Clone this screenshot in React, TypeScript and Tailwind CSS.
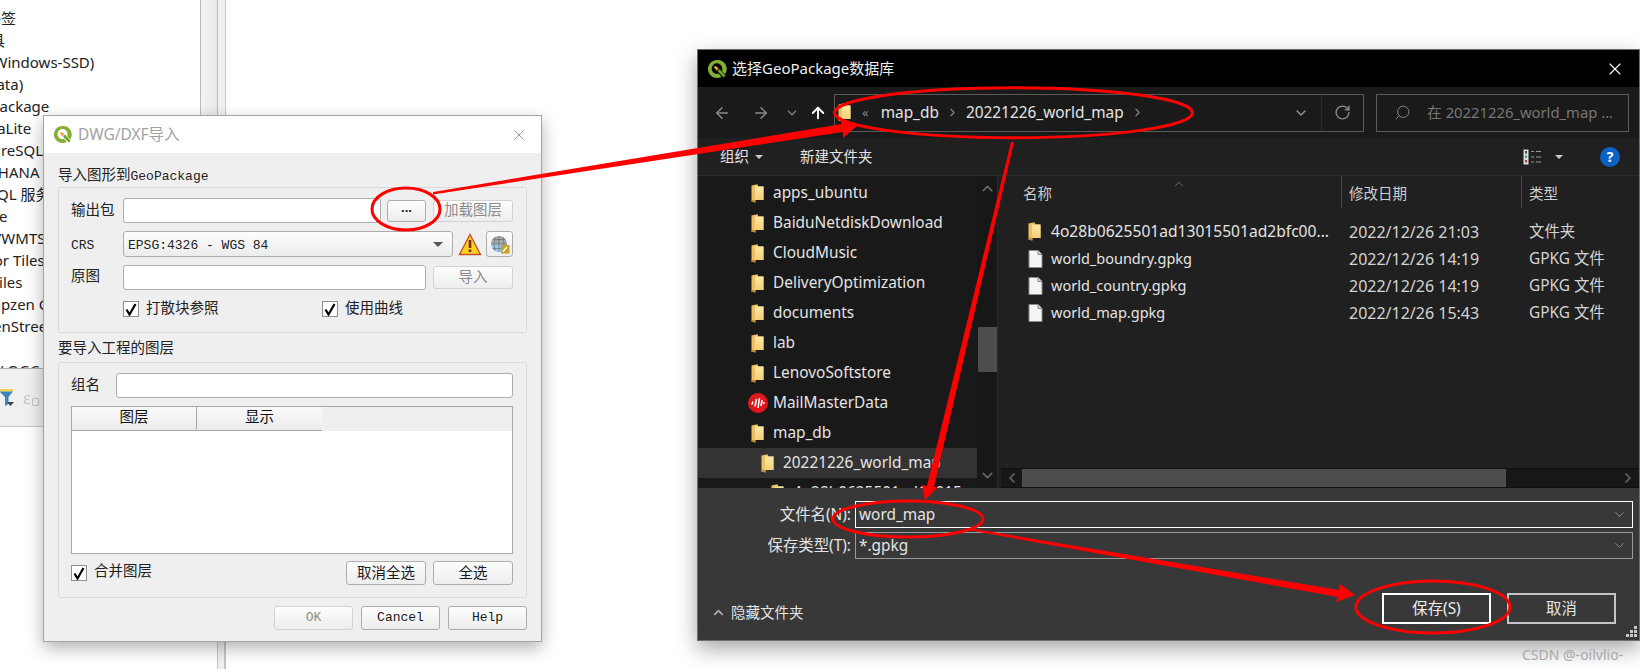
import { ArrowLeft, ArrowRight, ArrowUp, ChevronDown, ChevronLeft, ChevronRight, ChevronUp, RotateCw, Search, X } from "lucide-react";
import type { ReactNode } from "react";

const DARK_FONT = "font-['Noto_Sans','Noto_Sans_CJK_SC',sans-serif]";
const QT_MONO = "font-['Liberation_Mono','Noto_Sans_CJK_SC',monospace]";

const treeRows = [
  { text: "书签", cls: "-ml-[14px]" },
  { text: "具", cls: "-ml-[10px]" },
  { text: "(Windows-SSD)", cls: "-ml-[11px]" },
  { text: "(Data)", cls: "-ml-[19px]" },
  { text: "GeoPackage", cls: "-ml-[38px]" },
  { text: "SpatiaLite", cls: "-ml-[38px]" },
  { text: "PostgreSQL", cls: "-ml-[39px]" },
  { text: "SAP HANA", cls: "-ml-[33px]" },
  { text: "MSSQL 服务", cls: "-ml-[33px]" },
  { text: "Oracle", cls: "-ml-[38px]" },
  { text: "WMS/WMTS", cls: "-ml-[40px]" },
  { text: "Vector Tiles", cls: "-ml-[36px]" },
  { text: "XYZ Tiles", cls: "-ml-[39px]" },
  { text: "Mapzen Global", cls: "-ml-[21px]" },
  { text: "OpenStreetMap", cls: "-ml-[28px]" },
  { text: "", cls: "" },
  { text: "WFS / OGC", cls: "-ml-[36px]" },
];

const sidebarRows = [
  { name: "apps_ubuntu" },
  { name: "BaiduNetdiskDownload" },
  { name: "CloudMusic" },
  { name: "DeliveryOptimization" },
  { name: "documents" },
  { name: "lab" },
  { name: "LenovoSoftstore" },
  { name: "MailMasterData", mail: true },
  { name: "map_db" },
  { name: "20221226_world_map", indent: "pl-[63px]", active: true },
  { name: "4o28b0625501ad13015", indent: "pl-[73px]" },
];

const files = [
  { name: "4o28b0625501ad13015501ad2bfc00...", cls: "text-[15.600px]", date: "2022/12/26 21:03", type: "文件夹", folder: true },
  { name: "world_boundry.gpkg", cls: "text-[14.500px]", date: "2022/12/26 14:19", type: "GPKG 文件" },
  { name: "world_country.gpkg", cls: "text-[14.500px]", date: "2022/12/26 14:19", type: "GPKG 文件" },
  { name: "world_map.gpkg", cls: "text-[14.500px]", date: "2022/12/26 15:43", type: "GPKG 文件" },
];

const QgisLogo = ({ size = 20 }: { size?: number }) => (
  <svg width={size} height={size} viewBox="0 0 20 20" className="shrink-0">
    <path d="M10 1a9 9 0 1 0 4.300 16.900l-2.500-3.300A5.300 5.300 0 1 1 15.300 10c0 .7-.1 1.300-.3 1.900l3 3.300A9 9 0 0 0 10 1z" fill="#83b034" />
    <path d="M10.500 12l2-2 6 6.500-2 2z" fill="#6f9f2e" />
    <path d="M7.500 7.500l4.500 1.500-2.500 3z" fill="#ef8f2f" />
    <circle cx="8.500" cy="8.500" r="1.200" fill="#f4c64a" />
  </svg>
);

const FolderIcon = () => (
  <svg width="13" height="19" viewBox="0 0 13 19" className="shrink-0">
    <defs>
      <linearGradient id="folderFace" x1="0" y1="0" x2="0" y2="1">
        <stop offset="0" stopColor="#fee9a6" />
        <stop offset="1" stopColor="#f6cf78" />
      </linearGradient>
    </defs>
    <path d="M.500 1.500L5 .500h2v2h5.500v13.500H4.500V18.500L.500 17.500z" fill="#efbf62" />
    <path d="M4 2.500h8.500V16H4z" fill="url(#folderFace)" />
    <path d="M.500 15.500l3.500 1v2l-3.500-1z" fill="#b98a3a" />
  </svg>
);

const FileIcon = () => (
  <svg width="15" height="18" viewBox="0 0 15 18" className="shrink-0">
    <path d="M1 .500h9l4 4v13H1z" fill="#f4f5f7" stroke="#8a8a8a" />
    <path d="M10 .500v4h4" fill="#d8d8d8" stroke="#8a8a8a" />
  </svg>
);

const MailIcon = () => (
  <svg width="20" height="20" viewBox="0 0 20 20" className="-ml-[3px] -mr-[4px] shrink-0">
    <circle cx="10" cy="10" r="10" fill="#e0161e" />
    <path d="M4 11.500L5 8.500M7 13.500L8.500 6M10 15L11.500 5M13 13L14 7M15.500 11L16 9" stroke="#fff" strokeWidth="1.600" />
  </svg>
);

const CheckBox = () => (
  <span className="flex h-[16px] w-[16px] shrink-0 items-center justify-center border border-[#8e8e8e] bg-white">
    <svg width="12" height="13" viewBox="0 0 12 13">
      <path d="M1.500 6.500L4.500 11.500L10.500 1" fill="none" stroke="#000" strokeWidth="2.200" />
    </svg>
  </span>
);

const QtButton = ({ children, disabled, className }: { children: ReactNode; disabled?: boolean; className: string }) => (
  <div
    className={`flex items-center justify-center rounded-[3px] border bg-gradient-to-b from-[#fdfdfd] to-[#ededed] ${
      disabled ? "border-[#d2d2d2] text-[#8c8c8c]" : "border-[#adadad] text-[#1a1a1a]"
    } ${className}`}
  >
    {children}
  </div>
);

const QtInput = ({ className }: { className: string }) => (
  <div className={`rounded-[3px] border border-[#adadad] bg-white ${className}`} />
);

const ImportDialog = () => (
  <div className={`absolute left-[43px] top-[115px] flex h-[527px] w-[499px] flex-col border border-[#a3a3a3] bg-[#efefef] shadow-[0_6px_16px_rgba(0,0,0,0.3)] ${QT_MONO}`}>
    <div className="flex h-[37px] shrink-0 items-center bg-white pl-[9px] pr-[13px]">
      <QgisLogo size={19} />
      <span className={`ml-[6px] flex-1 text-[15.500px] text-[#a2a2a2] ${DARK_FONT}`}>DWG/DXF导入</span>
      <X size={18} strokeWidth={1} className="text-[#777]" />
    </div>
    <div className="flex flex-1 flex-col px-[14px] pt-[13px] text-[14.500px] text-[#222]">
      <div className="flex h-[21px] items-center">导入图形到<span className="text-[13px]">GeoPackage</span></div>
      <div className="h-[146px] rounded-[2px] border border-[#dadada] pl-[12px] pr-[13px] pt-[10px]">
        <div className="flex h-[25px] items-center">
          <span className="w-[52px] pt-[3px]">输出包</span>
          <QtInput className="h-[25px] w-[258px]" />
          <QtButton className="ml-[6px] h-[22px] w-[39px] pb-[7px] font-['Liberation_Sans',sans-serif] text-[13px] font-bold leading-none">...</QtButton>
          <QtButton disabled className="ml-[7px] h-[22px] w-[80px] pt-[3px]">加载图层</QtButton>
        </div>
        <div className="mt-[8px] flex h-[26px] items-center">
          <span className="w-[52px] pt-[3px] text-[13px]">CRS</span>
          <div className="flex h-[26px] w-[330px] items-center justify-between rounded-[3px] border border-[#adadad] bg-gradient-to-b from-[#fdfdfd] to-[#ececec] pl-[4px] pr-[9px] pt-[3px] text-[13px]">
            EPSG:4326 - WGS 84
            <span className="-mt-[3px] h-0 w-0 border-x-[5px] border-t-[5px] border-x-transparent border-t-[#555]" />
          </div>
          <svg width="24" height="23" viewBox="0 0 24 23" className="ml-[5px] shrink-0">
            <path d="M12 1.500L22.500 21.500H1.500z" fill="#fbd21e" stroke="#c4512c" strokeWidth="1.400" />
            <path d="M12 7v8M12 16.500v2.500" stroke="#7a2a10" strokeWidth="2.600" />
          </svg>
          <QtButton className="ml-[4px] h-[26px] w-[27px]">
            <svg width="21" height="20" viewBox="0 0 21 20">
              <path d="M2 10a8 8 0 0 1 16 0z" fill="#a8a8a8" />
              <path d="M2 10a8 8 0 0 0 16 0z" fill="#9fc6ea" />
              <path d="M2 10h16M10 2v16M3.500 5.500h13M3.500 14.500h13M6 3q-2 7 0 14M14 3q2 7 0 14" fill="none" stroke="#6f6f6f" strokeWidth="0.700" />
              <path d="M12 11h8.500v8.500H12z" fill="#c9a126" />
              <path d="M14 17.500l4-4.500" stroke="#fff" strokeWidth="1.600" />
            </svg>
          </QtButton>
        </div>
        <div className="mt-[8px] flex h-[25px] items-center">
          <span className="w-[52px] pt-[1px]">原图</span>
          <QtInput className="h-[25px] w-[303px]" />
          <QtButton disabled className="ml-[7px] h-[23px] w-[80px] pt-[3px]">导入</QtButton>
        </div>
        <div className="mt-[11px] flex h-[16px] items-center pl-[52px]">
          <CheckBox />
          <span className="ml-[7px] w-[176px] pt-[1px]">打散块参照</span>
          <CheckBox />
          <span className="ml-[7px] pt-[1px]">使用曲线</span>
        </div>
      </div>
      <div className="flex h-[29px] items-center pt-[4px]">要导入工程的图层</div>
      <div className="flex h-[236px] flex-col rounded-[2px] border border-[#dadada] pl-[12px] pr-[13px] pt-[10px]">
        <div className="flex h-[25px] items-center">
          <span className="w-[45px] pt-[3px]">组名</span>
          <QtInput className="h-[25px] flex-1" />
        </div>
        <div className="mt-[8px] flex h-[148px] flex-col border border-[#a8a8a8] bg-white">
          <div className="flex h-[24px] shrink-0 bg-[#efefef] text-[#111]">
            <div className="flex w-[125px] items-center justify-center border-b border-r border-[#a8a8a8] bg-gradient-to-b from-[#fafafa] to-[#ececec] pt-[1px]">图层</div>
            <div className="flex w-[125px] items-center justify-center border-b border-[#a8a8a8] bg-gradient-to-b from-[#fafafa] to-[#ececec] pt-[1px]">显示</div>
          </div>
        </div>
        <div className="mt-[7px] flex h-[24px] items-center">
          <CheckBox />
          <span className="ml-[7px] flex-1">合并图层</span>
          <QtButton className="h-[24px] w-[80px] pt-[3px]">取消全选</QtButton>
          <QtButton className="ml-[7px] h-[24px] w-[80px] pt-[3px]">全选</QtButton>
        </div>
      </div>
      <div className="mt-[8px] flex justify-end gap-[8px] text-[13px]">
        <QtButton disabled className="h-[24px] w-[79px]">OK</QtButton>
        <QtButton className="h-[24px] w-[79px]">Cancel</QtButton>
        <QtButton className="h-[24px] w-[79px]">Help</QtButton>
      </div>
    </div>
  </div>
);

const SaveDialog = () => (
  <div className={`absolute left-[697px] top-[49px] flex h-[592px] w-[943px] flex-col border border-[#6e6e6e] bg-[#383838] text-[15.400px] text-[#e4e4e4] shadow-[0_8px_20px_rgba(0,0,0,0.35)] ${DARK_FONT}`}>
    <div className="flex h-[37px] shrink-0 items-center bg-black pl-[9px] pr-[14px]">
      <QgisLogo size={20} />
      <span className="ml-[5px] flex-1 text-[15px] text-[#eee]">选择GeoPackage数据库</span>
      <X size={20} strokeWidth={1.300} className="text-white" />
    </div>
    <div className="flex h-[51px] shrink-0 items-center bg-[#1a1a1a]">
      <ArrowLeft size={18} className="ml-[15px] text-[#8a8a8a]" />
      <ArrowRight size={18} className="ml-[21px] text-[#8a8a8a]" />
      <ChevronDown size={14} strokeWidth={3} className="ml-[15px] text-[#777]" />
      <ArrowUp size={18} strokeWidth={2.500} className="ml-[10px] text-white" />
      <div className="ml-[7px] flex h-[38px] w-[530px] items-center border border-[#5a5a5a] pl-[3px]">
        <FolderIcon />
        <span className="ml-[11px] text-[13px] text-[#888]">«</span>
        <span className="ml-[12px]">map_db</span>
        <ChevronRight size={13} strokeWidth={2} className="ml-[7px] text-[#888]" />
        <span className="ml-[7px]">20221226_world_map</span>
        <ChevronRight size={13} strokeWidth={2} className="ml-[7px] text-[#888]" />
        <ChevronDown size={16} strokeWidth={2} className="ml-auto mr-[12px] text-[#999]" />
        <div className="flex h-full w-[42px] items-center justify-center border-l border-[#2b2b2b]">
          <RotateCw size={17} strokeWidth={2} className="text-[#8a8a8a]" />
        </div>
      </div>
      <div className="ml-[12px] flex h-[38px] w-[253px] items-center border border-[#5a5a5a] pl-[17px] text-[14.800px] text-[#777]">
        <Search size={17} strokeWidth={1.300} className="-scale-x-100 text-[#888]" />
        <span className="ml-[16px] whitespace-nowrap">在 20221226_world_map ...</span>
      </div>
    </div>
    <div className="flex h-[38px] shrink-0 items-center border-b border-[#2c2c2c] bg-[#202020] pl-[22px] text-[14.500px]">
      <span>组织</span>
      <span className="ml-[6px] h-0 w-0 border-x-[4px] border-t-[4px] border-x-transparent border-t-[#ccc]" />
      <span className="ml-[37px]">新建文件夹</span>
      <svg width="19" height="16" viewBox="0 0 19 16" className="ml-auto">
        <path d="M.500.500h5v15h-5z" fill="#ddd" />
        <path d="M2 2h2v2.500H2z" fill="#356" />
        <path d="M2 6.500h2V9H2z" fill="#3a6" />
        <path d="M2 11h2v2.500H2z" fill="#b33" />
        <path d="M8 2.500h3M13 2.500h5M8 8h3M13 8h5M8 13h3M13 13h5" stroke="#999" />
      </svg>
      <span className="ml-[13px] h-0 w-0 border-x-[4.500px] border-t-[4.500px] border-x-transparent border-t-[#ccc]" />
      <span className="ml-[37px] mr-[19px] flex h-[20px] w-[20px] items-center justify-center rounded-full bg-[#0a62c4] text-[14px] font-bold text-white">?</span>
    </div>
    <div className="flex h-[312px] shrink-0 bg-[#202020]">
      <div className="h-full w-[279px] overflow-hidden bg-[#191919] pt-[2px]">
        {sidebarRows.map((row) => (
          <div
            key={row.name}
            className={`flex h-[30px] items-center whitespace-nowrap ${row.indent ?? "pl-[53px]"} ${row.active ? "bg-[#333]" : ""}`}
          >
            {row.mail ? <MailIcon /> : <FolderIcon />}
            <span className="ml-[9px]">{row.name}</span>
          </div>
        ))}
      </div>
      <div className="flex h-full w-[20px] flex-col items-center justify-between bg-[#171717] py-[4px] text-[#666]">
        <ChevronUp size={17} strokeWidth={2.500} />
        <div className="absolute left-[280px] top-[277px] h-[45px] w-[19px] bg-[#4d4d4d]" />
        <ChevronDown size={17} strokeWidth={2.500} />
      </div>
      <div className="flex h-full flex-1 flex-col border-l border-[#2a2a2a] pl-[3px]">
        <div className="grid h-[32px] shrink-0 grid-cols-[340px_180px_1fr] items-center text-[14.500px] text-[#cfcfcf]">
          <div className="relative pl-[22px] pt-[3px]">
            名称
            <ChevronUp size={14} strokeWidth={1} className="absolute left-[171px] -top-[3px] text-[#aaa]" />
          </div>
          <div className="flex h-full items-center border-l border-[#4a4a4a] pl-[7px] pt-[3px]">修改日期</div>
          <div className="flex h-full items-center border-l border-[#4a4a4a] pl-[7px] pt-[3px]">类型</div>
        </div>
        <div className="flex-1 pt-[10px]">
          {files.map((file) => (
            <div key={file.name} className="grid h-[27px] grid-cols-[340px_180px_1fr] items-center whitespace-nowrap">
              <div className="flex items-center pl-[27px]">
                {file.folder ? <FolderIcon /> : <FileIcon />}
                <span className={`${file.folder ? "ml-[10px]" : "ml-[8px]"} ${file.cls}`}>{file.name}</span>
              </div>
              <div className="pl-[8px] text-[16px] text-[#d4d4d4]">{file.date}</div>
              <div className="pl-[8px] text-[#d4d4d4]">{file.type}</div>
            </div>
          ))}
        </div>
        <div className="flex h-[20px] shrink-0 items-center border-y border-[#111] bg-[#171717] text-[#666]">
          <div className="flex w-[21px] justify-center">
            <ChevronLeft size={16} strokeWidth={2.500} />
          </div>
          <div className="h-full w-[484px] bg-[#4d4d4d]" />
          <ChevronRight size={16} strokeWidth={2.500} className="ml-auto mr-[3px]" />
        </div>
      </div>
    </div>
    <div className="relative flex-1 bg-[#383838] pt-[13px]">
      <div className="flex h-[27px] items-center">
        <span className="w-[157px] pr-[4px] text-right">文件名(N):</span>
        <div className="flex h-[27px] w-[778px] items-center justify-between border border-white pl-[3px] pr-[5px]">
          word_map
          <ChevronDown size={15} strokeWidth={1} className="text-[#bbb]" />
        </div>
      </div>
      <div className="mt-[4px] flex h-[27px] items-center">
        <span className="w-[157px] pr-[4px] text-right">保存类型(T):</span>
        <div className="flex h-[27px] w-[778px] items-center justify-between border border-[#9a9a9a] pl-[3px] pr-[5px]">
          *.gpkg
          <ChevronDown size={15} strokeWidth={1} className="text-[#bbb]" />
        </div>
      </div>
      <div className="mt-[34px] flex h-[31px] items-center pl-[13px]">
        <ChevronUp size={15} strokeWidth={3} className="mt-[8px] text-[#aaa]" />
        <span className="ml-[5px] mt-[8px] text-[14.500px]">隐藏文件夹</span>
        <div className="ml-auto flex h-[31px] w-[109px] items-center justify-center border-2 border-white text-[#eee]">保存(S)</div>
        <div className="ml-[16px] mr-[23px] flex h-[31px] w-[109px] items-center justify-center border-2 border-[#c4c4c4]">取消</div>
      </div>
      <svg width="12" height="12" viewBox="0 0 12 12" className="absolute bottom-[2px] right-[1px]">
        <path d="M8 0h3v3H8zM4 4h3v3H4zM8 4h3v3H8zM0 8h3v3H0zM4 8h3v3H4zM8 8h3v3H8z" fill="#c8c8c8" />
      </svg>
    </div>
  </div>
);

const Annotations = () => (
  <svg width="1640" height="669" viewBox="0 0 1640 669" className="pointer-events-none absolute left-0 top-0">
    <g fill="none" stroke="#f00" strokeWidth="3">
      <ellipse cx="406" cy="209" rx="34" ry="21" />
      <ellipse cx="1013.500" cy="112.700" rx="179" ry="25" />
      <ellipse cx="908" cy="519" rx="75" ry="18" />
      <ellipse cx="1433" cy="607" rx="77" ry="26" />
    </g>
    <g fill="#f00">
      <polygon points="433,192 842,124 840,120 858,125 843,138 843,132 433,194.500" />
      <polygon points="1011,142 1014,142 934,487 938,487 925,500 922,485 927,486" />
      <polygon points="968,528 1339,590 1340,584 1355,595 1336,602 1338,597 968,530" />
    </g>
  </svg>
);

const App = () => {
  return (
    <div className="relative h-[669px] w-[1640px] overflow-hidden bg-white">
      {/* QGIS main window behind the dialogs */}
      <div className="flex h-full w-[226px] flex-col border-r border-[#c8c8c8]">
        <div className={`flex h-[369px] shrink-0 overflow-hidden border-b border-[#b0b0b0] text-[15px] text-[#222] ${DARK_FONT}`}>
          <div className="w-[200px] overflow-hidden pt-[7px]">
            {treeRows.map((row, i) => (
              <div key={i} className={`h-[22px] whitespace-nowrap leading-[22px] ${row.cls}`}>
                {row.text}
              </div>
            ))}
          </div>
          <div className="w-[18px] border-x border-[#bcbcbc] bg-gradient-to-r from-[#f4f4f4] to-[#e8e8e8]" />
          <div className="flex-1 bg-[#f0f0f0]" />
        </div>
        <div className="flex h-[58px] shrink-0 items-center border-b border-[#c4c4c4] bg-[#f0f0f0]">
          <svg width="14" height="18" viewBox="0 0 14 18" className="shrink-0">
            <path d="M0 0h13v2.500H0z" fill="#f2d24c" />
            <path d="M0 2.500h13L8.500 8v7L5 17V8L0 3z" fill="#3f83b8" />
            <path d="M7 13h7l-3.500 4z" fill="#444" />
          </svg>
          <span className="ml-[9px] font-['Liberation_Serif',serif] text-[18px] leading-none text-[#c4c4c4]">ε</span>
          <span className="ml-[1px] mt-[8px] h-[8px] w-[7px] rounded-[1px] border border-[#c4c4c4]" />
        </div>
        <div className="flex flex-1 justify-end">
          <div className="w-[8px] border-x border-[#c4c4c4] bg-[#f0f0f0]" />
        </div>
      </div>

      <ImportDialog />
      <SaveDialog />
      <Annotations />

      <span className={`absolute left-[1522px] top-[644px] text-[14px] text-[#a8a8a8] ${DARK_FONT}`}>CSDN @-oilvlio-</span>
    </div>
  );
};

export default App;
